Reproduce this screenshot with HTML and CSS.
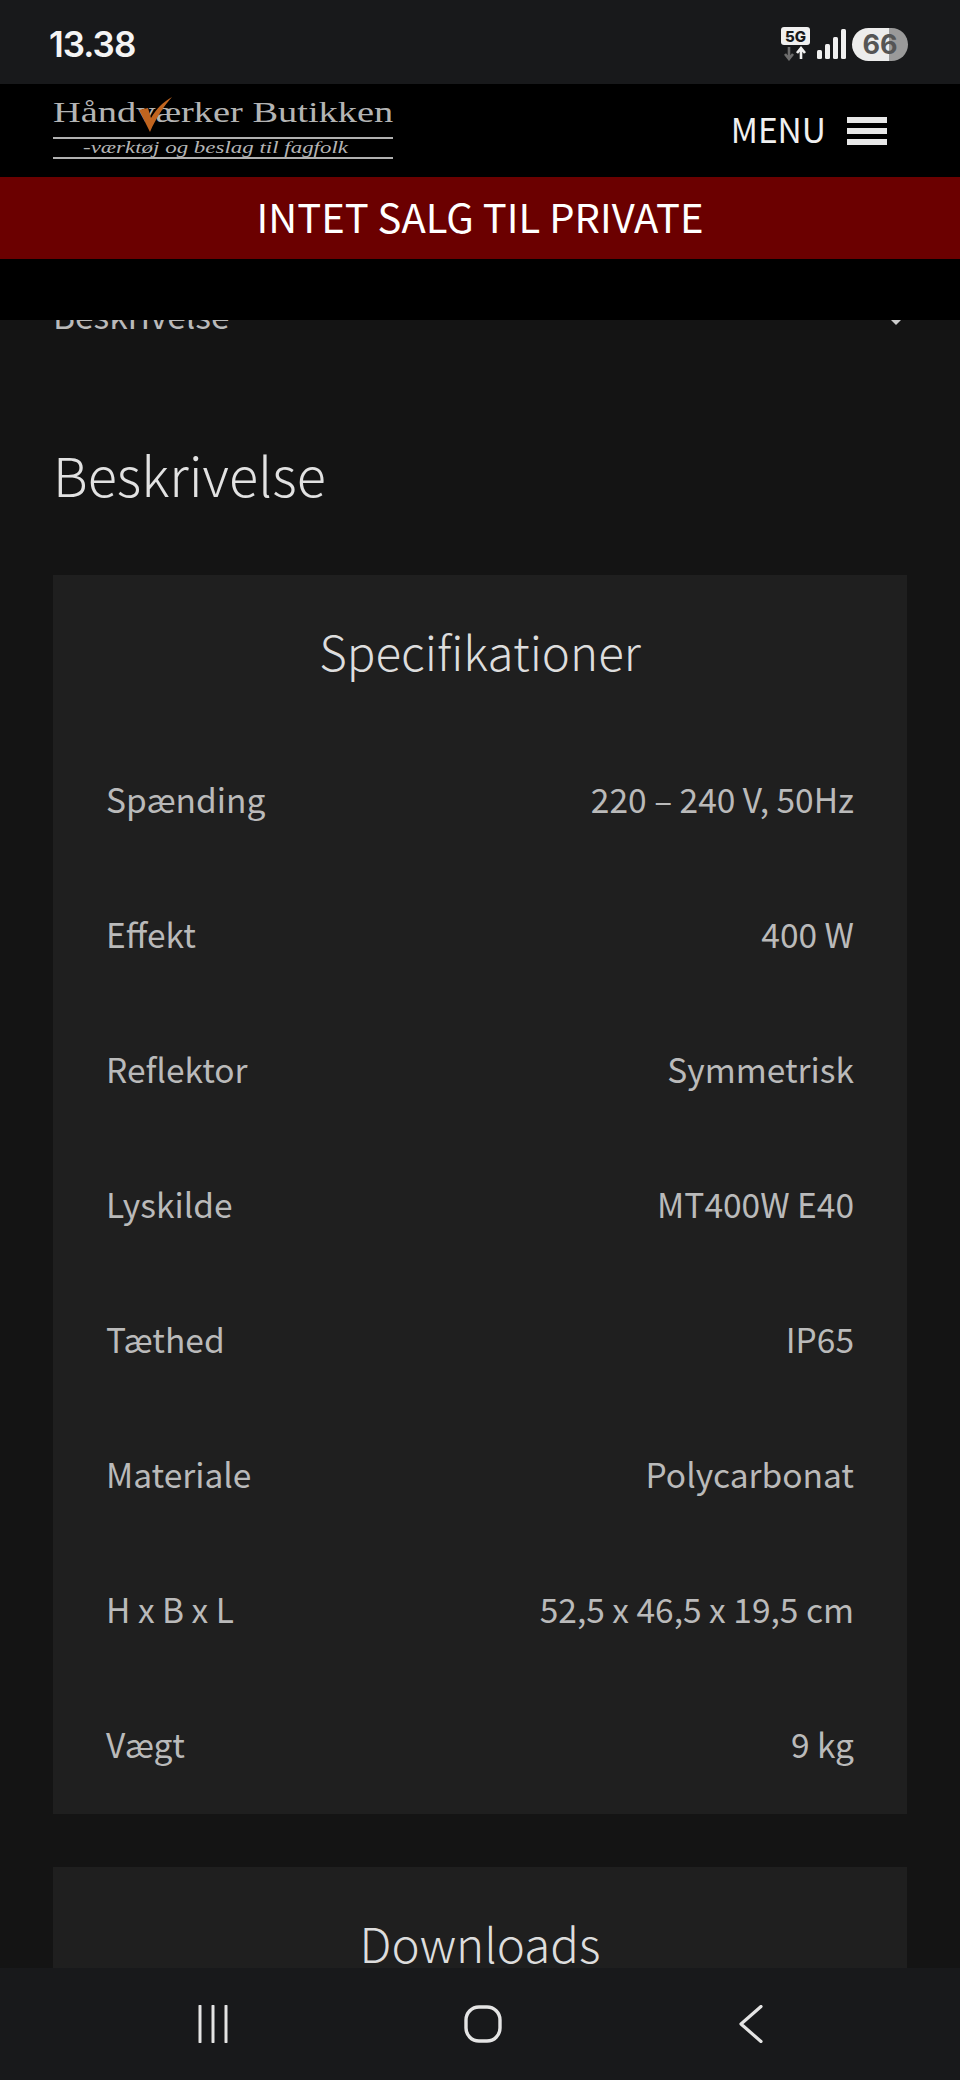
FILE: index.html
```html
<!DOCTYPE html>
<html>
<head>
    <title>Beskrivelse - Håndværker Butikken</title>
    <link rel="stylesheet" href="styles.css">
</head>
<body>
    <div class="status-bar">
        <span class="clock">13.38</span>
        <div class="status-icons">
            <svg class="net-icon" width="30" height="34" viewBox="0 0 30 34">
                <rect x="0" y="0" width="29" height="18" rx="3" fill="#f0f0f0"/>
                <path d="M8 20v11M4 27l4 5 4-5" fill="none" stroke="#6d6d6d" stroke-width="2.6"/>
                <path d="M20 32V21M16 26l4-5 4 5" fill="none" stroke="#f0f0f0" stroke-width="2.6"/>
                <text x="14.5" y="14.5" text-anchor="middle" class="net-label">5G</text>
            </svg>
            <svg class="signal-icon" width="29" height="31" viewBox="0 0 29 31">
                <rect x="0" y="21" width="5" height="9" rx="1.5" fill="#f0f0f0"/>
                <rect x="8" y="15" width="5" height="15" rx="1.5" fill="#f0f0f0"/>
                <rect x="16" y="8" width="5" height="22" rx="1.5" fill="#f0f0f0"/>
                <rect x="24" y="0" width="5" height="30" rx="1.5" fill="#f0f0f0"/>
            </svg>
            <div class="battery">66</div>
        </div>
    </div>

    <header class="site-header">
        <div class="logo">
            <div class="logo-name"><span>Håndværker Butikken</span></div>
            <svg class="logo-check" width="34" height="36" viewBox="0 0 34 36">
                <path d="M0 13 L9 11 L12 21 C17 12 24 5 33 0 C25 9 17 21 11 35 Z" fill="#c0641f"/>
            </svg>
            <div class="logo-tag"><span>-værktøj og beslag til fagfolk</span></div>
        </div>
        <div class="menu-toggle">
            <span>MENU</span>
            <div class="burger"><i></i><i></i><i></i></div>
        </div>
    </header>
    <div class="notice">INTET SALG TIL PRIVATE</div>
    <div class="header-pad"></div>

    <main class="content">
        <div class="tab-row">
            <span>Beskrivelse</span>
            <i class="caret"></i>
        </div>
        <h1>Beskrivelse</h1>

        <section class="card">
            <h2>Specifikationer</h2>
            <table class="spec-table">
                <tr><td>Spænding</td><td>220 – 240 V, 50Hz</td></tr>
                <tr><td>Effekt</td><td>400 W</td></tr>
                <tr><td>Reflektor</td><td>Symmetrisk</td></tr>
                <tr><td>Lyskilde</td><td>MT400W E40</td></tr>
                <tr><td>Tæthed</td><td>IP65</td></tr>
                <tr><td>Materiale</td><td>Polycarbonat</td></tr>
                <tr><td>H x B x L</td><td>52,5 x 46,5 x 19,5 cm</td></tr>
                <tr><td>Vægt</td><td>9 kg</td></tr>
            </table>
        </section>

        <section class="card">
            <h2>Downloads</h2>
        </section>
    </main>

    <nav class="nav-bar">
        <svg width="32" height="38" viewBox="0 0 32 38">
            <path d="M3 1v36M16 1v36M29 1v36" fill="none" stroke="#e4e4e4" stroke-width="3" stroke-linecap="round"/>
        </svg>
        <svg width="38" height="38" viewBox="0 0 38 38">
            <rect x="2" y="2" width="34" height="34" rx="13" fill="none" stroke="#e4e4e4" stroke-width="3.4"/>
        </svg>
        <svg width="24" height="38" viewBox="0 0 24 38">
            <path d="M22 1.500 L2 19 L22 36.500" fill="none" stroke="#e4e4e4" stroke-width="3.2" stroke-linecap="round" stroke-linejoin="round"/>
        </svg>
    </nav>
</body>
</html>
```

FILE: styles.css
```css
html, body {
    margin: 0;
    height: 2080px;
    overflow: hidden;
}
body {
    display: flex;
    flex-direction: column;
    font-family: "Noto Sans CJK JP", "Noto Sans", sans-serif;
    background-color: #141414;
    color: #bababa;
}

/* phone status bar */
.status-bar {
    height: 80px;
    flex: none;
    display: flex;
    justify-content: space-between;
    align-items: center;
    padding: 4px 52px 0 49px;
    background-color: #18191b;
}
.clock {
    font-family: Inter, Roboto, sans-serif;
    font-size: 35px;
    font-weight: 600;
    color: #f4f4f4;
    letter-spacing: -1px;
}
.status-icons {
    display: flex;
    align-items: center;
    gap: 6px;
}
.net-label {
    font-family: Inter, sans-serif;
    font-size: 15px;
    font-weight: 800;
    fill: #18191b;
}
.battery {
    width: 56px;
    height: 33px;
    border-radius: 17px;
    background: linear-gradient(to right, #ececec 66%, #9a9a9a 66%);
    color: #555555;
    font-family: Inter, sans-serif;
    font-size: 27px;
    font-weight: 700;
    line-height: 33px;
    text-align: center;
}

/* site header */
.site-header {
    height: 93px;
    flex: none;
    display: flex;
    justify-content: space-between;
    align-items: center;
    padding: 0 73px 0 53px;
    background-color: #000000;
}
.logo {
    position: relative;
    width: 340px;
    margin-bottom: 4px;
    color: #b4b4b4;
    font-family: "Liberation Serif", serif;
}
.logo-name {
    font-size: 30px;
    line-height: 28px;
    white-space: nowrap;
    padding-bottom: 11px;
    border-bottom: 2px solid #b0b0b0;
}
.logo-name span {
    display: inline-block;
    transform: scaleX(1.28);
    transform-origin: left center;
}
.logo-check {
    position: absolute;
    left: 86px;
    top: -1px;
}
.logo-tag {
    font-size: 16.500px;
    font-style: italic;
    line-height: 18px;
    padding-left: 30px;
    border-bottom: 2px solid #b0b0b0;
    white-space: nowrap;
}
.logo-tag span {
    display: inline-block;
    transform: scaleX(1.39);
    transform-origin: left center;
}
.menu-toggle {
    display: flex;
    align-items: center;
    gap: 21px;
    font-size: 33.500px;
    color: #f0f0f0;
}
.menu-toggle span {
    margin-bottom: 4px;
}
.burger {
    width: 40px;
    display: flex;
    flex-direction: column;
    gap: 5px;
}
.burger i {
    height: 6px;
    background-color: #e8e8e8;
}
.notice {
    height: 82px;
    flex: none;
    line-height: 78px;
    text-align: center;
    font-size: 40px;
    color: #ffffff;
    background-color: #6b0000;
}
.header-pad {
    height: 61px;
    flex: none;
    background-color: #000000;
}

/* page content */
.content {
    flex: 1;
    min-height: 0;
    overflow: hidden;
    padding: 0 53px;
}
.tab-row {
    display: flex;
    justify-content: space-between;
    align-items: center;
    height: 50px;
    margin-top: -31px;
    font-size: 33.500px;
    padding-right: 4px;
}
.caret {
    border-left: 7px solid transparent;
    border-right: 7px solid transparent;
    border-top: 7px solid #cccccc;
    margin-top: 15px;
}
h1 {
    margin: 99px 0 0 0;
    font-size: 54px;
    line-height: 72px;
    font-weight: 300;
    color: #e2e2e2;
}
.card {
    margin-top: 53px;
    padding: 36px 53px 3px;
    background-color: #1f1f1f;
}
h1 + .card {
    margin-top: 65px;
}
h2 {
    margin: 0;
    font-size: 47.500px;
    line-height: 80px;
    font-weight: 300;
    text-align: center;
    color: #dddddd;
}
.spec-table {
    width: 100%;
    margin-top: 40px;
    border-collapse: collapse;
    font-size: 33.500px;
}
.spec-table td {
    height: 135px;
    padding: 0;
}
.spec-table td:last-child {
    text-align: right;
}

/* phone nav bar */
.nav-bar {
    height: 112px;
    flex: none;
    display: grid;
    grid-template-columns: 197px 32px 235px 38px 237px 24px;
    align-items: center;
    background-color: #18191b;
}
.nav-bar svg:nth-child(1) {
    grid-column: 2;
}
.nav-bar svg:nth-child(2) {
    grid-column: 4;
}
.nav-bar svg:nth-child(3) {
    grid-column: 6;
}
```
